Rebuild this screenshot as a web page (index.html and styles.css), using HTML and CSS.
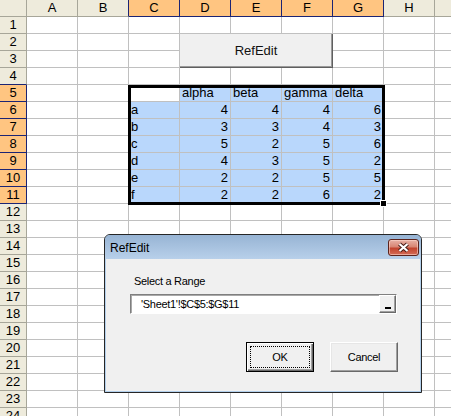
FILE: index.html
```html
<!DOCTYPE html>
<html>
<head>
<meta charset="utf-8">
<title>RefEdit</title>
<link rel="stylesheet" href="styles.css">
</head>
<body>
<div class="screen">
  <div class="sheet">
    <div class="hd"></div><div class="hd">A</div><div class="hd edge-r">B</div><div class="hd sel">C</div><div class="hd sel">D</div><div class="hd sel">E</div><div class="hd sel">F</div><div class="hd sel">G</div><div class="hd">H</div><div class="hd"></div>
    <div class="hd">1</div><div class="c"></div><div class="c"></div><div class="c"></div><div class="c"></div><div class="c"></div><div class="c"></div><div class="c"></div><div class="c"></div><div class="c"></div>
    <div class="hd">2</div><div class="c"></div><div class="c"></div><div class="c"></div><div class="c"></div><div class="c"></div><div class="c"></div><div class="c"></div><div class="c"></div><div class="c"></div>
    <div class="hd">3</div><div class="c"></div><div class="c"></div><div class="c"></div><div class="c"></div><div class="c"></div><div class="c"></div><div class="c"></div><div class="c"></div><div class="c"></div>
    <div class="hd edge-b">4</div><div class="c"></div><div class="c"></div><div class="c"></div><div class="c"></div><div class="c"></div><div class="c"></div><div class="c"></div><div class="c"></div><div class="c"></div>
    <div class="hd sel">5</div><div class="c"></div><div class="c"></div><div class="c"></div><div class="c s l">alpha</div><div class="c s l">beta</div><div class="c s l">gamma</div><div class="c s l">delta</div><div class="c"></div><div class="c"></div>
    <div class="hd sel">6</div><div class="c"></div><div class="c"></div><div class="c s l">a</div><div class="c s n">4</div><div class="c s n">4</div><div class="c s n">4</div><div class="c s n">6</div><div class="c"></div><div class="c"></div>
    <div class="hd sel">7</div><div class="c"></div><div class="c"></div><div class="c s l">b</div><div class="c s n">3</div><div class="c s n">3</div><div class="c s n">4</div><div class="c s n">3</div><div class="c"></div><div class="c"></div>
    <div class="hd sel">8</div><div class="c"></div><div class="c"></div><div class="c s l">c</div><div class="c s n">5</div><div class="c s n">2</div><div class="c s n">5</div><div class="c s n">6</div><div class="c"></div><div class="c"></div>
    <div class="hd sel">9</div><div class="c"></div><div class="c"></div><div class="c s l">d</div><div class="c s n">4</div><div class="c s n">3</div><div class="c s n">5</div><div class="c s n">2</div><div class="c"></div><div class="c"></div>
    <div class="hd sel">10</div><div class="c"></div><div class="c"></div><div class="c s l">e</div><div class="c s n">2</div><div class="c s n">2</div><div class="c s n">5</div><div class="c s n">5</div><div class="c"></div><div class="c"></div>
    <div class="hd sel">11</div><div class="c"></div><div class="c"></div><div class="c s l">f</div><div class="c s n">2</div><div class="c s n">2</div><div class="c s n">6</div><div class="c s n">2</div><div class="c"></div><div class="c"></div>
    <div class="hd">12</div><div class="c"></div><div class="c"></div><div class="c"></div><div class="c"></div><div class="c"></div><div class="c"></div><div class="c"></div><div class="c"></div><div class="c"></div>
    <div class="hd">13</div><div class="c"></div><div class="c"></div><div class="c"></div><div class="c"></div><div class="c"></div><div class="c"></div><div class="c"></div><div class="c"></div><div class="c"></div>
    <div class="hd">14</div><div class="c"></div><div class="c"></div><div class="c"></div><div class="c"></div><div class="c"></div><div class="c"></div><div class="c"></div><div class="c"></div><div class="c"></div>
    <div class="hd">15</div><div class="c"></div><div class="c"></div><div class="c"></div><div class="c"></div><div class="c"></div><div class="c"></div><div class="c"></div><div class="c"></div><div class="c"></div>
    <div class="hd">16</div><div class="c"></div><div class="c"></div><div class="c"></div><div class="c"></div><div class="c"></div><div class="c"></div><div class="c"></div><div class="c"></div><div class="c"></div>
    <div class="hd">17</div><div class="c"></div><div class="c"></div><div class="c"></div><div class="c"></div><div class="c"></div><div class="c"></div><div class="c"></div><div class="c"></div><div class="c"></div>
    <div class="hd">18</div><div class="c"></div><div class="c"></div><div class="c"></div><div class="c"></div><div class="c"></div><div class="c"></div><div class="c"></div><div class="c"></div><div class="c"></div>
    <div class="hd">19</div><div class="c"></div><div class="c"></div><div class="c"></div><div class="c"></div><div class="c"></div><div class="c"></div><div class="c"></div><div class="c"></div><div class="c"></div>
    <div class="hd">20</div><div class="c"></div><div class="c"></div><div class="c"></div><div class="c"></div><div class="c"></div><div class="c"></div><div class="c"></div><div class="c"></div><div class="c"></div>
    <div class="hd">21</div><div class="c"></div><div class="c"></div><div class="c"></div><div class="c"></div><div class="c"></div><div class="c"></div><div class="c"></div><div class="c"></div><div class="c"></div>
    <div class="hd">22</div><div class="c"></div><div class="c"></div><div class="c"></div><div class="c"></div><div class="c"></div><div class="c"></div><div class="c"></div><div class="c"></div><div class="c"></div>
    <div class="hd">23</div><div class="c"></div><div class="c"></div><div class="c"></div><div class="c"></div><div class="c"></div><div class="c"></div><div class="c"></div><div class="c"></div><div class="c"></div>
    <div class="hd">24</div><div class="c"></div><div class="c"></div><div class="c"></div><div class="c"></div><div class="c"></div><div class="c"></div><div class="c"></div><div class="c"></div><div class="c"></div>
  </div>

  <div class="range"><span class="handle"></span></div>

  <div class="sheet-btn">RefEdit</div>

  <div class="dialog">
    <div class="titlebar">
      <span class="title">RefEdit</span>
      <span class="close">
        <svg width="13" height="11" viewBox="0 0 13 11">
          <path d="M2.5 2 L10.5 9 M10.5 2 L2.5 9" stroke="#4a1f1a" stroke-width="4.2" fill="none"/>
          <path d="M2.5 2 L10.5 9 M10.5 2 L2.5 9" stroke="#ffffff" stroke-width="2.2" fill="none"/>
        </svg>
      </span>
    </div>
    <div class="client">
      <div class="label">Select a Range</div>
      <div class="refbox">
        <span class="reftext">'Sheet1'!$C$5:$G$11</span>
        <span class="refbtn"><span class="bar"></span></span>
      </div>
      <div class="buttons">
        <div class="btn default"><span class="focus">OK</span></div>
        <div class="btn">Cancel</div>
      </div>
    </div>
  </div>
</div>
</body>
</html>
```

FILE: styles.css
```css
html, body {
  margin: 0;
  padding: 0;
  background: #ffffff;
}

.screen {
  position: relative;
  width: 451px;
  height: 416px;
  overflow: hidden;
  font-family: "Liberation Sans", Arial, sans-serif;
}

.sheet {
  display: grid;
  grid-template-columns: 27px repeat(9, 51px);
  grid-auto-rows: 17px;
  width: 486px;
}

.sheet > div {
  box-sizing: border-box;
  border-right: 1px solid #c0c0c0;
  border-bottom: 1px solid #c0c0c0;
  font-size: 13px;
  line-height: 16px;
  white-space: nowrap;
  overflow: hidden;
  color: #000;
}

.sheet > .hd {
  background: #eeebdc;
  border-color: #a7a699;
  text-align: center;
}

.sheet > .hd.sel {
  background: #ffc581;
  border-color: #1b2474;
}

.sheet > .hd.edge-r {
  border-right-color: #1b2474;
}

.sheet > .hd.edge-b {
  border-bottom-color: #1b2474;
}

.sheet > .s {
  background: #b9d7fc;
}

.sheet > .l {
  padding-left: 2px;
}

.sheet > .n {
  text-align: right;
  padding-right: 2px;
}

.range {
  position: absolute;
  left: 128px;
  top: 85px;
  width: 257px;
  height: 120px;
  box-sizing: border-box;
  border: 3px solid #000;
}

.handle {
  position: absolute;
  right: -5px;
  bottom: -5px;
  width: 5px;
  height: 5px;
  background: #000;
  border: 1px solid #fff;
}

.sheet-btn {
  position: absolute;
  left: 180px;
  top: 34px;
  width: 153px;
  height: 34px;
  box-sizing: border-box;
  background: #f0f0f0;
  border-right: 1px solid #5f5f5f;
  border-bottom: 1px solid #5f5f5f;
  box-shadow: inset -1px -1px 0 #9a9a9a;
  display: flex;
  align-items: center;
  justify-content: center;
  font-size: 13px;
  color: #111;
}

.dialog {
  position: absolute;
  left: 104px;
  top: 234px;
  width: 318px;
  height: 159px;
  box-sizing: border-box;
  border: 1px solid #262626;
  border-radius: 6px 6px 0 0;
  background: #b3d0ec;
  padding: 0 1px 1px;
  display: flex;
  flex-direction: column;
  overflow: hidden;
}

.titlebar {
  height: 24px;
  flex: none;
  background: linear-gradient(#97b4d4, #b8d0ea);
  display: flex;
  align-items: flex-start;
  justify-content: space-between;
  padding: 0 2px 0 5px;
  margin: 0 -1px;
}

.title {
  font-size: 12px;
  line-height: 24px;
  padding-top: 1px;
  color: #000;
}

.close {
  margin-top: 4px;
  width: 31px;
  height: 17px;
  box-sizing: border-box;
  border: 1px solid #5c231c;
  border-radius: 3px;
  background: linear-gradient(#e8b2a6 0%, #d88674 45%, #c2442e 55%, #d46c57 100%);
  box-shadow: inset 0 0 0 1px rgba(255, 220, 210, 0.55);
  display: flex;
  align-items: center;
  justify-content: center;
}

.client {
  flex: 1;
  background: #f0f0f0;
  padding: 16px 22px 0 24px;
  display: flex;
  flex-direction: column;
  font-size: 11px;
  letter-spacing: -0.3px;
  color: #000;
}

.label {
  line-height: 13px;
  margin-left: 4px;
}

.refbox {
  margin-top: 6px;
  height: 20px;
  box-sizing: border-box;
  border: 1px solid;
  border-color: #7f7f7f #ffffff #ffffff #7f7f7f;
  box-shadow: inset 1px 1px 0 #a9a9a9;
  background: #ffffff;
  display: flex;
  align-items: center;
  margin-right: 1px;
}

.reftext {
  flex: 1;
  padding-left: 10px;
  line-height: 18px;
}

.refbtn {
  width: 17px;
  height: 18px;
  box-sizing: border-box;
  background: #f0f0f0;
  border: 1px solid;
  border-color: #ffffff #6a6a6a #6a6a6a #ffffff;
  box-shadow: inset -1px -1px 0 #a0a0a0;
  display: flex;
  align-items: flex-end;
  justify-content: center;
  padding-bottom: 3px;
}

.bar {
  width: 6px;
  height: 2px;
  background: #000;
}

.buttons {
  margin-top: 28px;
  display: flex;
  justify-content: flex-end;
  gap: 16px;
}

.btn {
  width: 68px;
  height: 30px;
  box-sizing: border-box;
  background: #f0f0f0;
  border: 1px solid;
  border-color: #ffffff #696969 #696969 #ffffff;
  box-shadow: inset -1px -1px 0 #a0a0a0, inset 1px 1px 0 #e6e6e6;
  display: flex;
  align-items: center;
  justify-content: center;
  line-height: 13px;
}

.btn.default {
  border: 1px solid #000;
  box-shadow: inset 1px 1px 0 #ffffff, inset -1px -1px 0 #696969, inset -2px -2px 0 #a0a0a0;
  padding: 3px;
}

.focus {
  flex: 1;
  align-self: stretch;
  border: 1px dotted #000;
  display: flex;
  align-items: center;
  justify-content: center;
}
```
